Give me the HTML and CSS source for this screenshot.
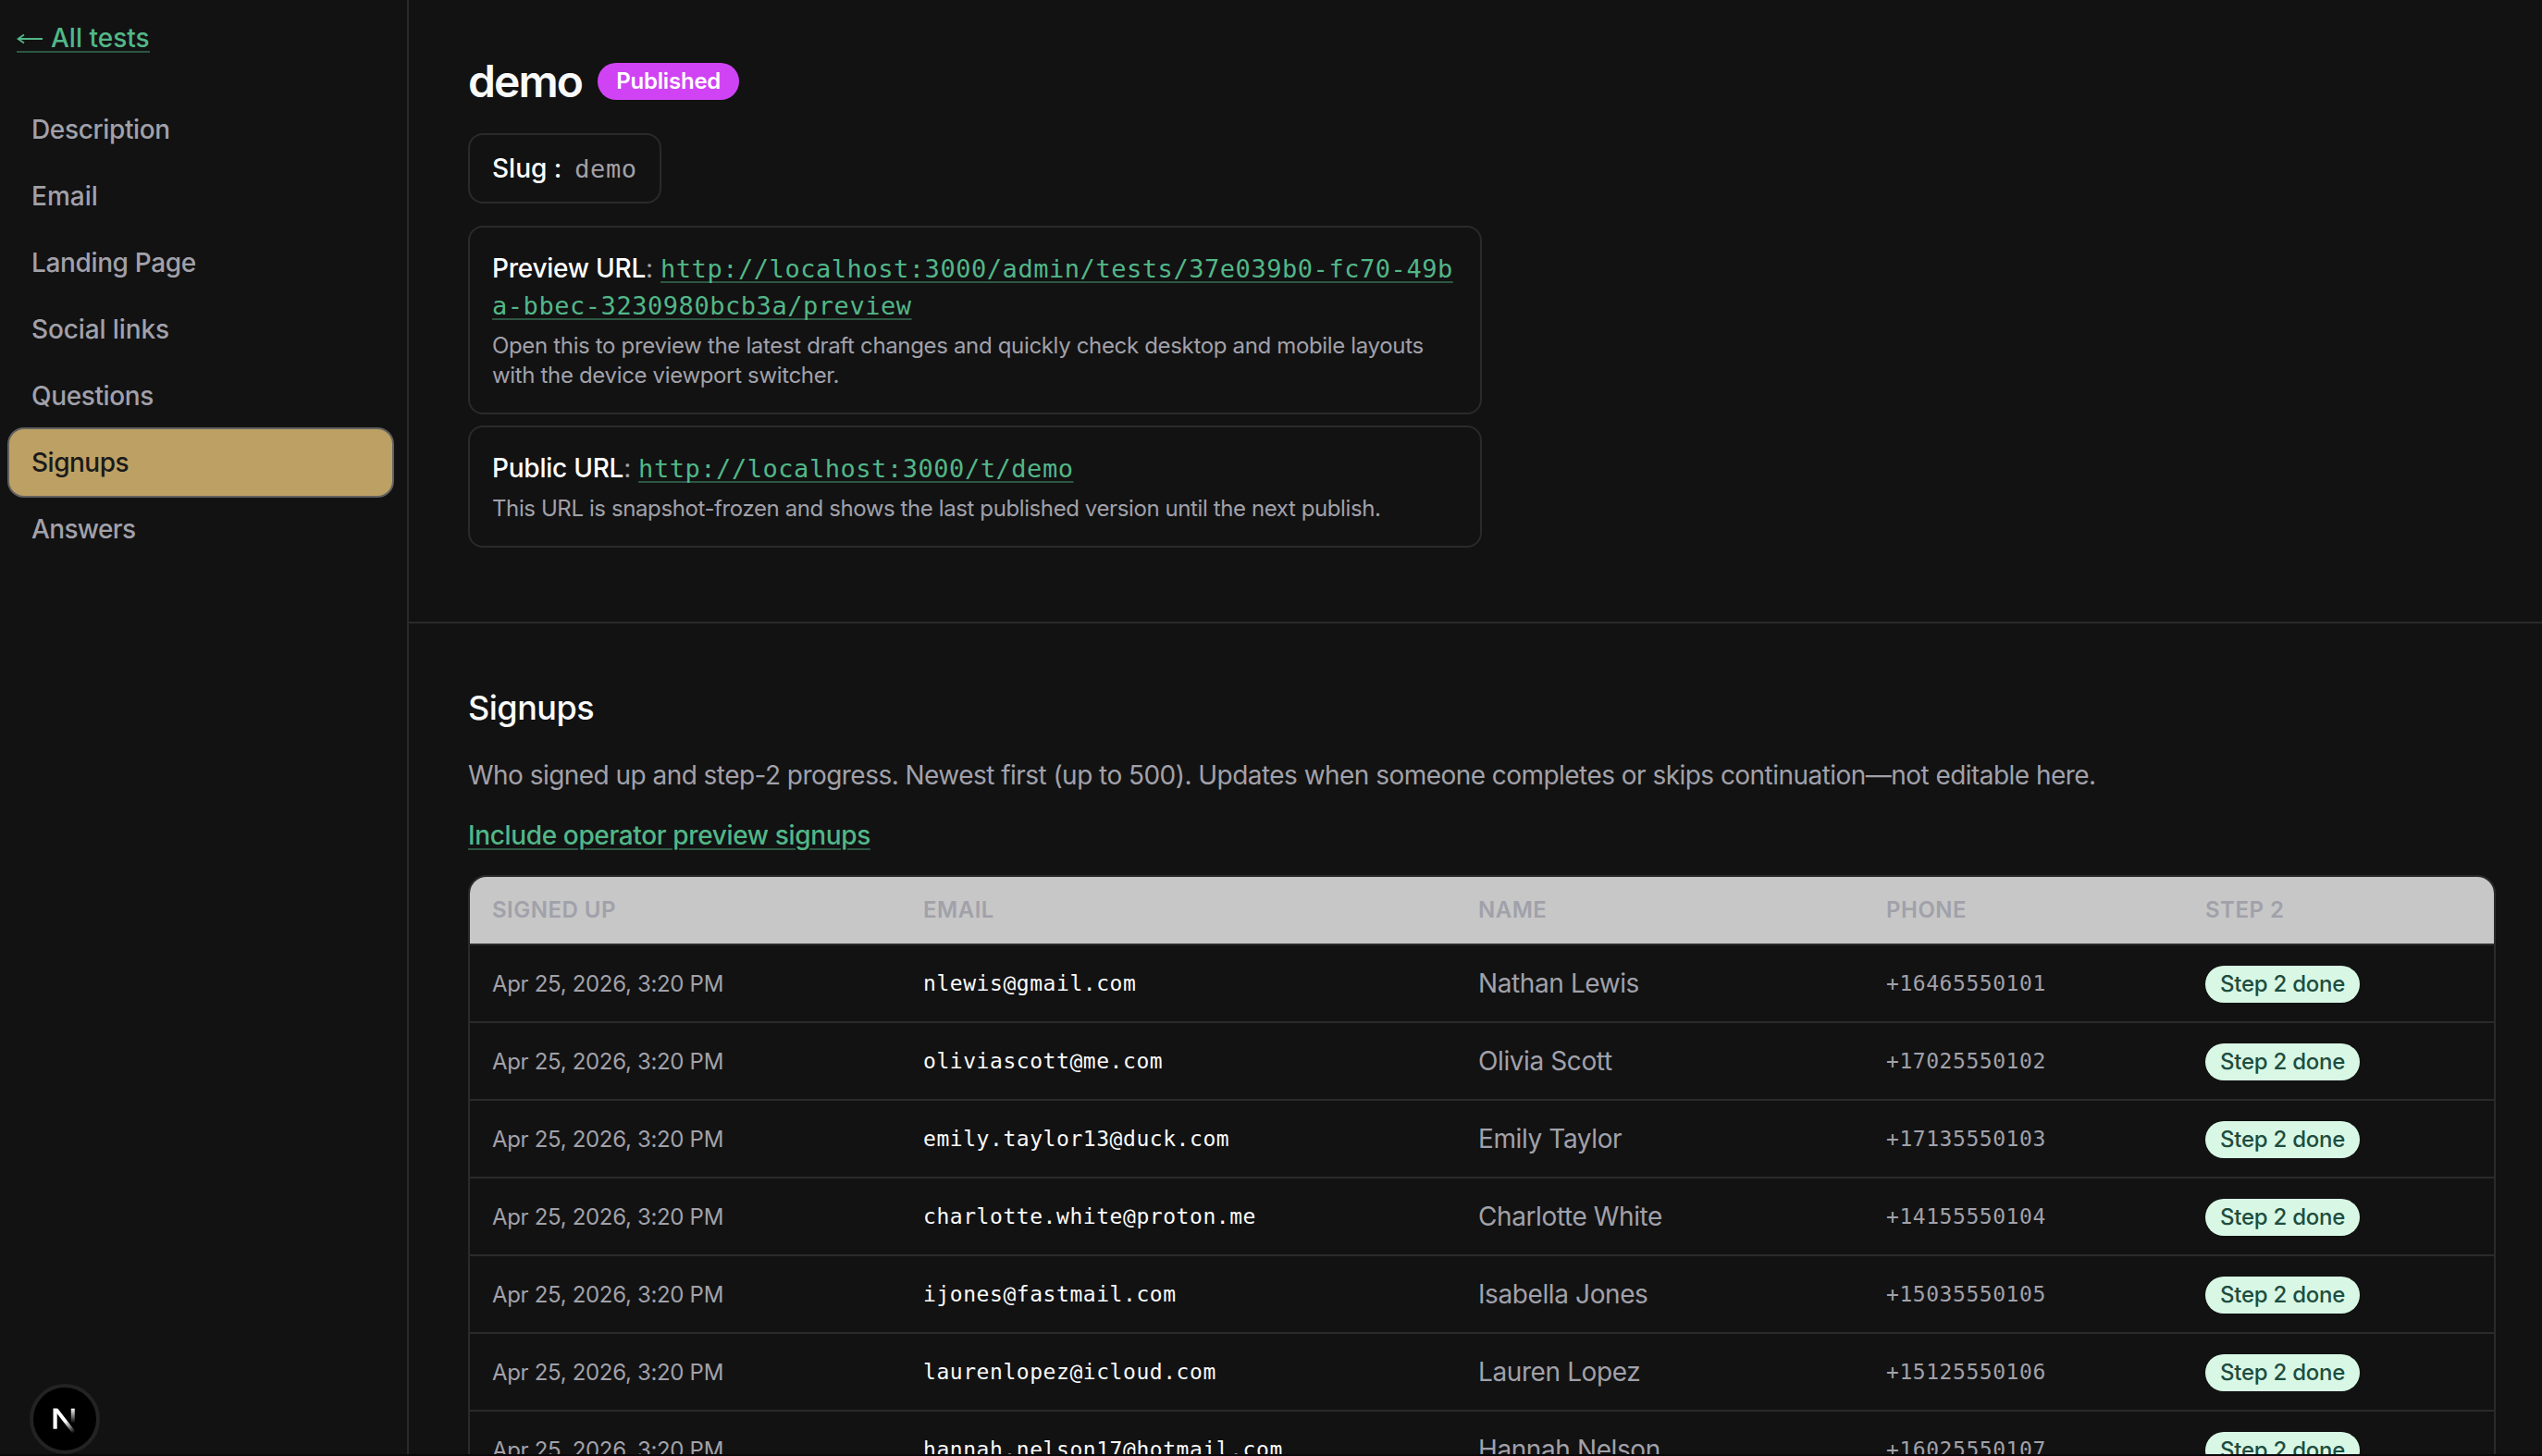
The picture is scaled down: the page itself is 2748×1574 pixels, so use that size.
FILE: index.html
```html
<!DOCTYPE html>
<html lang="en">
<head>
<meta charset="utf-8">
<title>demo – Signups</title>
<link rel="stylesheet" href="styles.css">
</head>
<body>
<div class="app">
  <aside class="sidebar">
    <a class="link back" href="#"><svg class="arrow" viewBox="0 0 30 20" aria-hidden="true"><path d="M1.5 10H28M8 5.4L1.5 10L8 14.6"/></svg><span class="back-label">All tests</span></a>
    <nav class="nav">
      <a class="nav-item" href="#">Description</a>
      <a class="nav-item nav-email" href="#">Email</a>
      <a class="nav-item" href="#">Landing Page</a>
      <a class="nav-item nav-social" href="#">Social links</a>
      <a class="nav-item" href="#">Questions</a>
      <a class="nav-item active" href="#">Signups</a>
      <a class="nav-item nav-answers" href="#">Answers</a>
    </nav>
  </aside>
  <main class="main">
    <header class="header">
      <div class="title-row"><h1 class="title">demo</h1><span class="published">Published</span></div>
      <div class="slug"><span class="slug-label">Slug :</span><span class="mono">demo</span></div>
      <section class="card">
        <p class="url"><span class="label">Preview URL</span>: <a class="link mono" href="#">http://localhost:3000/admin/tests/37e039b0-fc70-49ba-bbec-3230980bcb3a/preview</a></p>
        <p class="hint">Open this to preview the latest draft changes and quickly check desktop and mobile layouts with the device viewport switcher.</p>
      </section>
      <section class="card">
        <p class="url"><span class="label">Public URL</span>: <a class="link mono" href="#">http://localhost:3000/t/demo</a></p>
        <p class="hint hint-public">This URL is snapshot-frozen and shows the last published version until the next publish.</p>
      </section>
    </header>
    <section class="signups">
      <h2 class="heading">Signups</h2>
      <p class="intro">Who signed up and step-2 progress. Newest first (up to 500). Updates when someone completes or skips continuation—not editable here.</p>
      <a class="link include" href="#">Include operator preview signups</a>
      <div class="table">
        <div class="row head"><span>Signed up</span><span>Email</span><span>Name</span><span>Phone</span><span>Step 2</span></div>
        <div class="row"><span class="date">Apr 25, 2026, 3:20 PM</span><span class="email">nlewis@gmail.com</span><span class="name">Nathan Lewis</span><span class="phone">+16465550101</span><span><span class="done">Step 2 done</span></span></div>
        <div class="row"><span class="date">Apr 25, 2026, 3:20 PM</span><span class="email">oliviascott@me.com</span><span class="name">Olivia Scott</span><span class="phone">+17025550102</span><span><span class="done">Step 2 done</span></span></div>
        <div class="row"><span class="date">Apr 25, 2026, 3:20 PM</span><span class="email">emily.taylor13@duck.com</span><span class="name">Emily Taylor</span><span class="phone">+17135550103</span><span><span class="done">Step 2 done</span></span></div>
        <div class="row"><span class="date">Apr 25, 2026, 3:20 PM</span><span class="email">charlotte.white@proton.me</span><span class="name">Charlotte White</span><span class="phone">+14155550104</span><span><span class="done">Step 2 done</span></span></div>
        <div class="row"><span class="date">Apr 25, 2026, 3:20 PM</span><span class="email">ijones@fastmail.com</span><span class="name">Isabella Jones</span><span class="phone">+15035550105</span><span><span class="done">Step 2 done</span></span></div>
        <div class="row"><span class="date">Apr 25, 2026, 3:20 PM</span><span class="email">laurenlopez@icloud.com</span><span class="name">Lauren Lopez</span><span class="phone">+15125550106</span><span><span class="done">Step 2 done</span></span></div>
        <div class="row"><span class="date">Apr 25, 2026, 3:20 PM</span><span class="email">hannah.nelson17@hotmail.com</span><span class="name">Hannah Nelson</span><span class="phone">+16025550107</span><span><span class="done">Step 2 done</span></span></div>
      </div>
    </section>
  </main>
</div>
<div class="dev-badge">
  <svg viewBox="0 0 76 76" aria-hidden="true">
    <defs>
      <linearGradient id="stem" x1="0" y1="26.5" x2="0" y2="42.5" gradientUnits="userSpaceOnUse"><stop offset="0" stop-color="#fff"/><stop offset="1" stop-color="#fff" stop-opacity="0"/></linearGradient>
      <linearGradient id="diag" x1="39" y1="40" x2="48" y2="53" gradientUnits="userSpaceOnUse"><stop offset="0" stop-color="#fff"/><stop offset="1" stop-color="#fff" stop-opacity="0"/></linearGradient>
    </defs>
    <circle cx="38" cy="38" r="36" fill="#000" stroke="#232323" stroke-width="4"/>
    <rect x="25.5" y="26.7" width="4.2" height="22" fill="#fff"/>
    <path d="M25.5 26.7H30.5L49.6 51.6Q48.4 53 46.6 54L28 30Z" fill="url(#diag)"/>
    <rect x="44.8" y="26.7" width="4" height="16" fill="url(#stem)"/>
  </svg>
</div>
</body>
</html>
```
FILE: styles.css
```css
* { box-sizing: border-box; }

:root {
  --bg: #121212;
  --border: #2a2a2b;
  --muted: #a1a1aa;
  --text: #fafafa;
  --link: #52b788;
  --link-line: #2d5744;
}

body {
  margin: 0;
  height: 1574px;
  overflow: hidden;
  background: #0a080a;
  color: var(--muted);
  font: 400 28px/40px Inter, sans-serif;
}

h1, h2, p { margin: 0; }

.app {
  display: flex;
  height: 1572px;
  overflow: hidden;
  background: var(--bg);
}

.sidebar {
  flex: none;
  width: 442px;
  padding: 21px 16px 0 10px;
  border-right: 2px solid var(--border);
}

.link {
  color: var(--link);
  text-decoration: underline 2px var(--link-line);
  text-underline-offset: 4px;
}

.back {
  display: flex;
  align-items: center;
  width: fit-content;
  height: 36px;
  margin-left: 8px;
  padding-top: 5px;
  border-bottom: 2px solid var(--link-line);
  font-weight: 500;
  text-decoration: none;
}

.arrow {
  width: 30px;
  height: 20px;
  margin: 2px 7px 0 0;
  fill: none;
  stroke: var(--link);
  stroke-width: 1.8;
}

.nav { margin-top: 47px; }

.nav-item {
  display: block;
  height: 72px;
  padding: 0 24px;
  border-radius: 16px;
  color: var(--muted);
  font-weight: 500;
  line-height: 72px;
  letter-spacing: -0.36px;
  text-decoration: none;
}

.nav-email { letter-spacing: 0; }
.nav-social { letter-spacing: -0.12px; }
.nav-answers { letter-spacing: -0.65px; }

.nav-item.active {
  background: #bda063;
  color: #1a1a1a;
  letter-spacing: -0.5px;
  box-shadow: 0 0 0 2px #626160;
}

.main { flex: 1; min-width: 0; }

.header {
  display: flex;
  flex-direction: column;
  align-items: flex-start;
  height: 674px;
  padding: 56px 64px 0;
  border-bottom: 2px solid var(--border);
}

.title-row {
  display: flex;
  align-items: center;
  gap: 17px;
  height: 64px;
}

.title {
  color: var(--text);
  font-size: 48px;
  font-weight: 600;
  line-height: 64px;
  letter-spacing: -1.9px;
}

.published {
  height: 40px;
  padding: 0 20px;
  border-radius: 20px;
  background: #d043f4;
  color: #fff;
  font-size: 24px;
  font-weight: 600;
  line-height: 39px;
  letter-spacing: -0.2px;
}

.slug {
  display: flex;
  align-items: baseline;
  gap: 14px;
  height: 76px;
  margin: 24px 0;
  padding: 16px 24px;
  border: 2px solid var(--border);
  border-radius: 16px;
}

.slug-label, .label { color: #fff; font-weight: 500; }
.label { letter-spacing: -0.24px; }

.mono {
  font-family: "DejaVu Sans Mono", monospace;
  font-size: 27px;
  line-height: 1;
  letter-spacing: 0.545px;
  text-decoration-skip-ink: none;
}

.card {
  width: 1096px;
  margin-bottom: 12px;
  padding: 24px;
  border: 2px solid var(--border);
  border-radius: 16px;
}

.url { word-break: break-all; }

.hint {
  margin-top: 8px;
  font-size: 24px;
  line-height: 32px;
  letter-spacing: -0.34px;
}

.hint-public { letter-spacing: -0.4px; }

.signups { padding: 65px 50px 0 64px; }

.heading {
  color: var(--text);
  font-size: 36px;
  font-weight: 500;
  line-height: 52px;
  letter-spacing: -0.5px;
}

.intro {
  margin-top: 25px;
  line-height: 44px;
  letter-spacing: -0.54px;
  white-space: nowrap;
}

.include {
  display: inline-block;
  margin-top: 23px;
  font-weight: 500;
  line-height: 40px;
  letter-spacing: -0.36px;
}

.table {
  margin-top: 23px;
  overflow: hidden;
  border: 2px solid var(--border);
  border-radius: 20px;
}

.row {
  display: grid;
  grid-template-columns: 466px 600px 441px 345px 1fr;
  align-items: center;
  height: 84px;
  border-bottom: 2px solid var(--border);
}

.row > span { padding-left: 24px; }

.head {
  height: 74px;
  background: #c7c7c7;
  color: #a1a1aa;
  font-size: 24px;
  font-weight: 600;
  letter-spacing: 0.5px;
  text-transform: uppercase;
}

.row > .date { padding-top: 1px; font-size: 24px; letter-spacing: -0.32px; }
.name { letter-spacing: -0.4px; }

.email, .phone {
  font: 23px/40px "DejaVu Sans Mono", monospace;
  letter-spacing: 0.553px;
}

.email { color: var(--text); }

.done {
  display: inline-block;
  height: 40px;
  padding: 0 16px;
  border-radius: 20px;
  background: #d8f8e5;
  color: #1f4d3f;
  font-size: 24px;
  font-weight: 500;
  line-height: 39px;
  letter-spacing: -0.26px;
  vertical-align: middle;
}

.dev-badge {
  position: fixed;
  left: 32px;
  top: 1496px;
  width: 76px;
  height: 76px;
}

.dev-badge svg { display: block; width: 76px; height: 76px; }
```
